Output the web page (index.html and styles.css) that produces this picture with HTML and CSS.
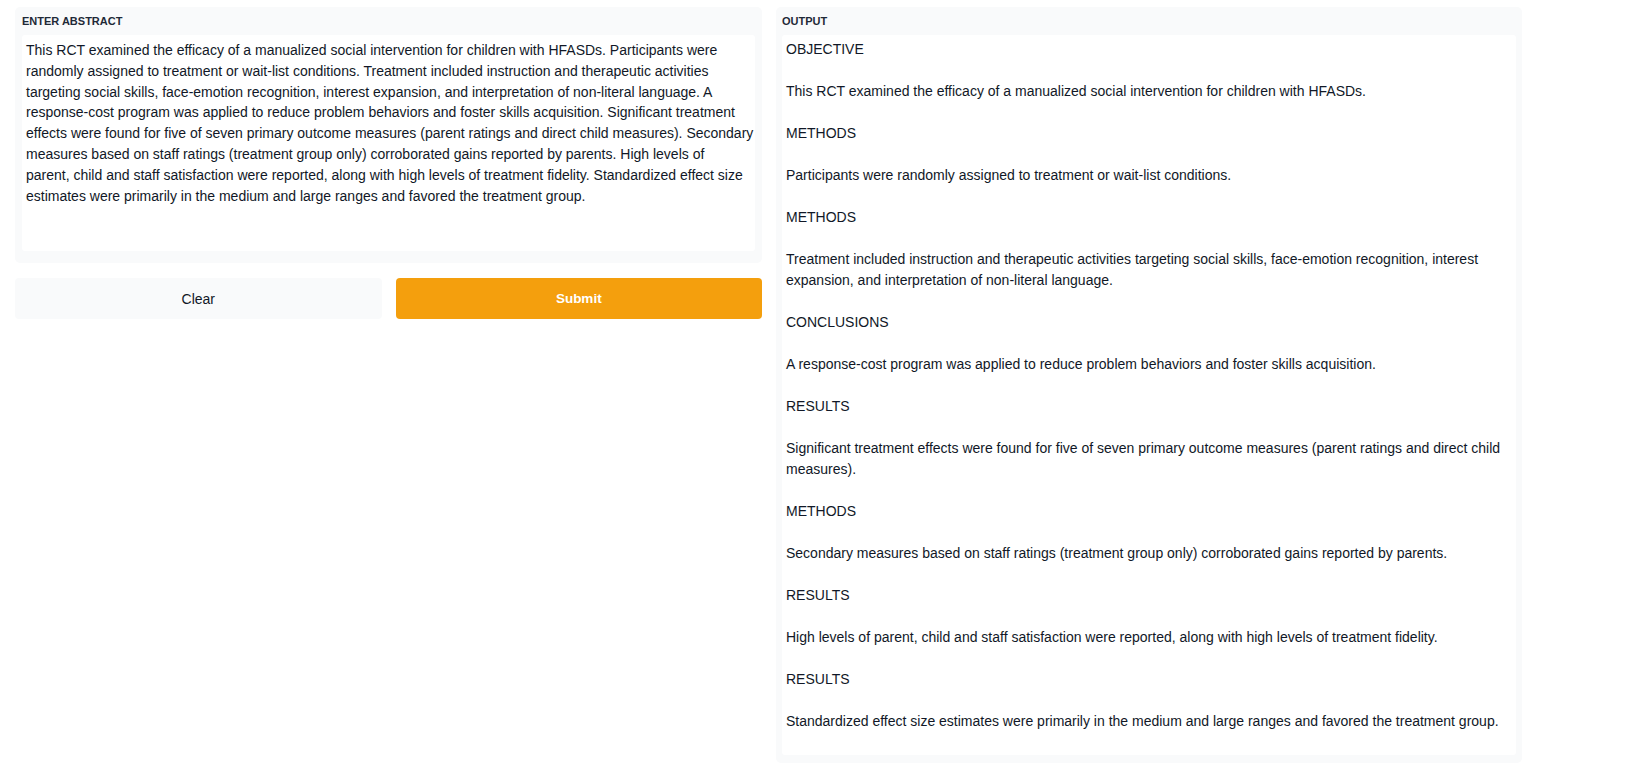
FILE: index.html
```html
<!DOCTYPE html>
<html lang="en">
<head>
<meta charset="utf-8">
<title>Abstract Classifier</title>
<link rel="stylesheet" href="styles.css">
</head>
<body>
<div class="app">
  <div class="col">
    <div class="panel panel-input">
      <div class="label">ENTER ABSTRACT</div>
      <div class="box textbox">This RCT examined the efficacy of a manualized social intervention for children with HFASDs. Participants were<br>randomly assigned to treatment or wait-list conditions. Treatment included instruction and therapeutic activities<br>targeting social skills, face-emotion recognition, interest expansion, and interpretation of non-literal language. A<br>response-cost program was applied to reduce problem behaviors and foster skills acquisition. Significant treatment<br>effects were found for five of seven primary outcome measures (parent ratings and direct child measures). Secondary<br>measures based on staff ratings (treatment group only) corroborated gains reported by parents. High levels of<br>parent, child and staff satisfaction were reported, along with high levels of treatment fidelity. Standardized effect size<br>estimates were primarily in the medium and large ranges and favored the treatment group.</div>
    </div>
    <div class="buttons">
      <button class="btn btn-secondary">Clear</button>
      <button class="btn btn-primary">Submit</button>
    </div>
  </div>
  <div class="col">
    <div class="panel panel-output">
      <div class="label">OUTPUT</div>
      <div class="box output">
        <p>OBJECTIVE</p>
        <p>This RCT examined the efficacy of a manualized social intervention for children with HFASDs.</p>
        <p>METHODS</p>
        <p>Participants were randomly assigned to treatment or wait-list conditions.</p>
        <p>METHODS</p>
        <p>Treatment included instruction and therapeutic activities targeting social skills, face-emotion recognition, interest<br>expansion, and interpretation of non-literal language.</p>
        <p>CONCLUSIONS</p>
        <p>A response-cost program was applied to reduce problem behaviors and foster skills acquisition.</p>
        <p>RESULTS</p>
        <p>Significant treatment effects were found for five of seven primary outcome measures (parent ratings and direct child<br>measures).</p>
        <p>METHODS</p>
        <p>Secondary measures based on staff ratings (treatment group only) corroborated gains reported by parents.</p>
        <p>RESULTS</p>
        <p>High levels of parent, child and staff satisfaction were reported, along with high levels of treatment fidelity.</p>
        <p>RESULTS</p>
        <p>Standardized effect size estimates were primarily in the medium and large ranges and favored the treatment group.</p>
      </div>
    </div>
  </div>
</div>
</body>
</html>
```
FILE: styles.css
```css
* { box-sizing: border-box; }
html, body { margin: 0; padding: 0; background: #ffffff; }
body {
  font-family: "Liberation Sans", Arial, sans-serif;
  color: #111827;
  padding: 7px 0 0 15px;
}
.app {
  display: grid;
  grid-template-columns: 747px 746px;
  column-gap: 14px;
  align-items: start;
}
.col {
  display: flex;
  flex-direction: column;
  gap: 15px;
}
.panel {
  background: #f9fafb;
  border-radius: 5px;
}
.panel-input { padding: 0 7px 12px 7px; }
.panel-output { padding: 0 6px 8px 6px; }
.label {
  font-size: 11px;
  font-weight: 700;
  line-height: 14px;
  padding-top: 7px;
  margin-bottom: 7px;
  color: #1f2937;
}
.box {
  background: #ffffff;
  border-radius: 3px;
  font-size: 14px;
  line-height: 20.8px;
  padding: 5px 4px 4px 4px;
}
.textbox {
  height: 216px;
  white-space: nowrap;
  overflow: hidden;
}
.output {
  height: 720px;
  padding-top: 4px;
}
.output p { margin: 0 0 21px 0; line-height: 21px; }
.output p:last-child { margin-bottom: 0; }
.buttons {
  display: grid;
  grid-template-columns: 1fr 1fr;
  column-gap: 14px;
}
.btn {
  height: 41px;
  border: none;
  border-radius: 4px;
  font-family: "Liberation Sans", Arial, sans-serif;
  cursor: pointer;
}
.btn-secondary { background: #f9fafb; color: #111827; font-size: 14px; font-weight: 400; }
.btn-primary { background: #f49f0d; color: #ffffff; font-size: 13.5px; font-weight: 700; }
```
